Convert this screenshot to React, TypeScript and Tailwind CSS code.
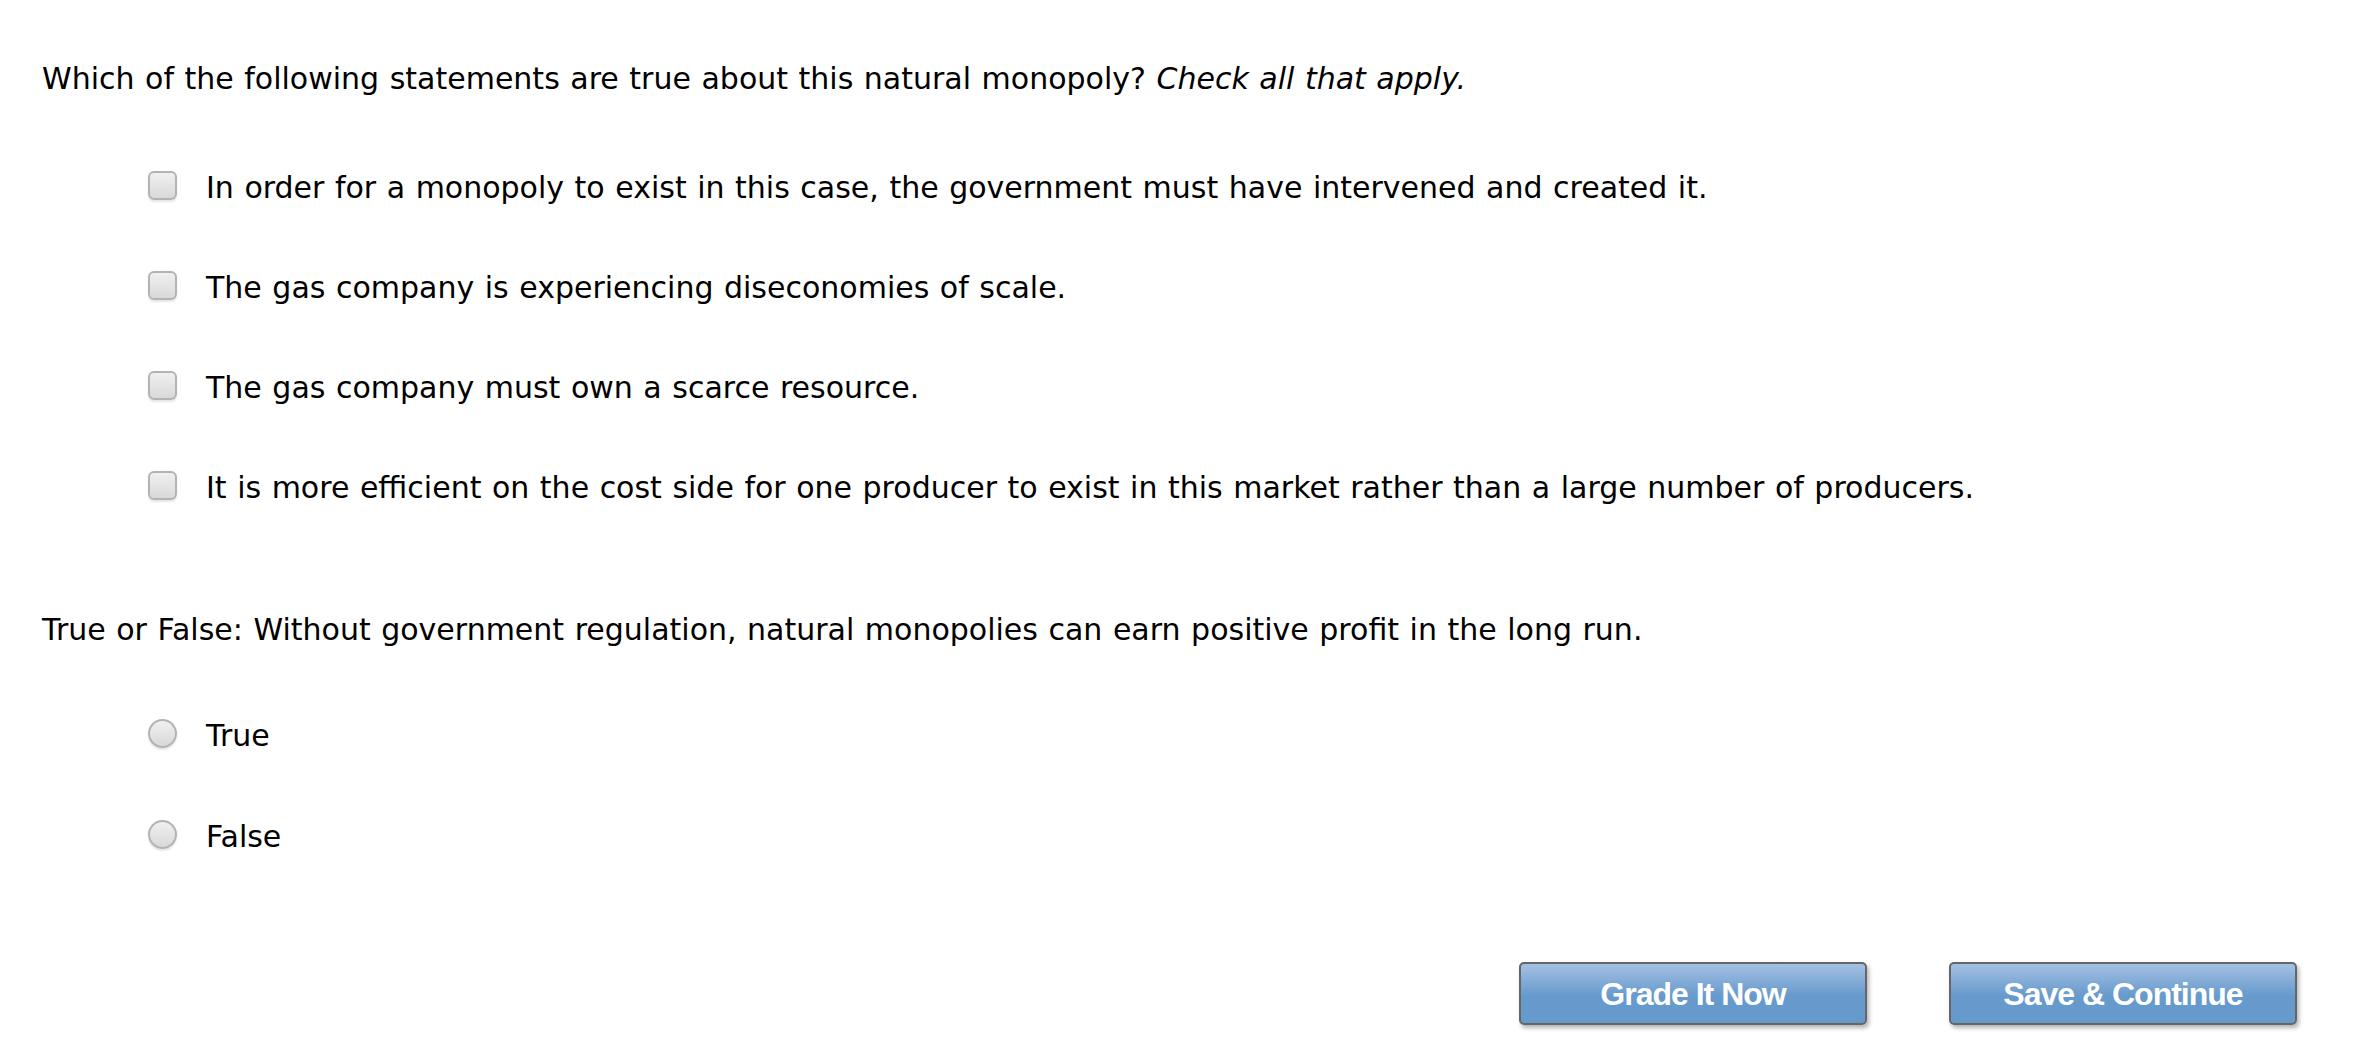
import React from "react";

const checkOptions = [
  "In order for a monopoly to exist in this case, the government must have intervened and created it.",
  "The gas company is experiencing diseconomies of scale.",
  "The gas company must own a scarce resource.",
  "It is more efficient on the cost side for one producer to exist in this market rather than a large number of producers.",
];

const radioOptions = ["True", "False"];

const Checkbox = () => (
  <span className="mb-[6px] block h-[29px] w-[29px] shrink-0 rounded-[6px] border-2 border-[#b3b3b3] bg-linear-to-b from-[#f0f0f0] to-[#d9d9d9] shadow-[0_2px_2px_rgba(0,0,0,0.1)]" />
);

const Radio = () => (
  <span className="mb-[6px] block h-[29px] w-[29px] shrink-0 rounded-full border-2 border-[#b3b3b3] bg-linear-to-b from-[#f0f0f0] to-[#d9d9d9] shadow-[0_2px_2px_rgba(0,0,0,0.1)]" />
);

const Button = ({ label }: { label: string }) => (
  <button className="flex h-[63px] w-[348px] items-center justify-center rounded-[5px] border-2 border-[#666666] bg-linear-to-b from-[#a3c1e3] to-[#6699cc] to-55% font-['Liberation_Sans',Arial,sans-serif] text-[32px] font-bold text-white shadow-[2px_3px_4px_rgba(0,0,0,0.3)] [letter-spacing:-1px]">
    {label}
  </button>
);

export default function App() {
  return (
    <div className="min-h-screen bg-white font-['DejaVu_Sans',Verdana,sans-serif] text-[30px] leading-[36px] text-black [word-spacing:1px]">
      <div className="pl-[42px] pt-[61px]">
        <p>
          Which of the following statements are true about this natural monopoly?{" "}
          <em>Check all that apply.</em>
        </p>

        <div className="mt-[73px] flex flex-col gap-[64px] pl-[106px]">
          {checkOptions.map((text) => (
            <label key={text} className="flex items-center gap-[29px]">
              <Checkbox />
              <span>{text}</span>
            </label>
          ))}
        </div>

        <p className="mt-[106px]">
          True or False: Without government regulation, natural monopolies can earn positive profit in the long run.
        </p>

        <div className="mt-[70px] flex flex-col gap-[65px] pl-[106px]">
          {radioOptions.map((text) => (
            <label key={text} className="flex items-center gap-[29px]">
              <Radio />
              <span>{text}</span>
            </label>
          ))}
        </div>
      </div>

      <div className="mt-[107px] flex justify-end gap-[82px] pr-[66px]">
        <Button label="Grade It Now" />
        <Button label="Save & Continue" />
      </div>
    </div>
  );
}
